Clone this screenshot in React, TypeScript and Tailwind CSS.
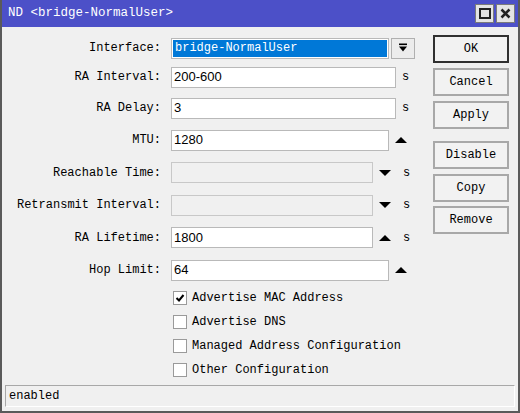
import React from "react";

const mono = { fontFamily: '"Liberation Mono", "DejaVu Sans Mono", monospace' };
const sans = { fontFamily: '"Liberation Sans", Arial, sans-serif' };

function Up() {
  return (
    <svg width="12" height="8" viewBox="0 0 12 8"><path d="M0 7 L6 1 L12 7 Z" fill="#000" /></svg>
  );
}
function Down() {
  return (
    <svg width="12" height="8" viewBox="0 0 12 8"><path d="M0 1 L6 7 L12 1 Z" fill="#000" /></svg>
  );
}

function Label({ text }: { text: string }) {
  return (
    <div className="w-[160px] shrink-0 text-right pr-[1px] text-[12px] text-black" style={mono}>
      {text}
    </div>
  );
}

function Field({
  label,
  value,
  width,
  disabled,
  arrow,
  unit,
  h,
}: {
  label: string;
  value?: string;
  width: number;
  disabled?: boolean;
  arrow?: "up" | "down";
  unit?: boolean;
  h: string;
}) {
  return (
    <div className={`flex items-center ${h}`}>
      <Label text={label} />
      <div
        className={`ml-[9px] h-[21px] border flex items-center pl-[2px] text-[13px] text-black ${
          disabled ? "bg-[#f0f0f0] border-[#c8c8c8]" : "bg-white border-[#b9b9b9]"
        }`}
        style={{ ...sans, width }}
      >
        {value}
      </div>
      {arrow && (
        <div className="w-[24px] flex justify-center items-center">
          {arrow === "up" ? <Up /> : <Down />}
        </div>
      )}
      {unit && (
        <div className="ml-[6px] text-[12px] text-black" style={mono}>
          s
        </div>
      )}
    </div>
  );
}

function Btn({ text, def, mt }: { text: string; def?: boolean; mt?: string }) {
  return (
    <div
      className={`w-[76px] h-[28px] flex items-center justify-center bg-[#f2f2f2] text-[12px] text-black ${
        def ? "border-2 border-[#303030]" : "border-2 border-[#a8a8a8]"
      } ${mt ?? ""}`}
      style={mono}
    >
      {text}
    </div>
  );
}

function Check({ label, checked }: { label: string; checked?: boolean }) {
  return (
    <div className="flex items-center h-[24px] pl-[171px]">
      <div className="w-[14px] h-[14px] bg-white border border-[#9a9a9a] flex items-center justify-center">
        {checked && (
          <svg width="10" height="10" viewBox="0 0 10 10">
            <path d="M1.5 5 L4 7.5 L8.5 2" stroke="#000" strokeWidth="2" fill="none" />
          </svg>
        )}
      </div>
      <div className="ml-[5px] text-[12px] text-black" style={mono}>
        {label}
      </div>
    </div>
  );
}

export default function App() {
  return (
    <div className="w-[520px] h-[413px] bg-[#f0f0f0] border-x-2 border-b-2 border-[#5a5a5a] flex flex-col overflow-hidden">
      <div className="h-[27px] bg-[#4c50c8] flex items-center justify-between pl-[6px] pr-[3px]">
        <div className="text-white text-[12.5px]" style={mono}>
          ND &lt;bridge-NormalUser&gt;
        </div>
        <div className="flex gap-[2px]">
          <div className="w-[19px] h-[19px] bg-[#e4e4e4] border border-[#7a7a7a] flex items-center justify-center">
            <div className="w-[12px] h-[11px] border-2 border-[#222]" />
          </div>
          <div className="w-[19px] h-[19px] bg-[#e4e4e4] border border-[#7a7a7a] flex items-center justify-center">
            <svg width="11" height="11" viewBox="0 0 11 11">
              <path d="M1.5 1.5 L9.5 9.5 M9.5 1.5 L1.5 9.5" stroke="#222" strokeWidth="2.5" />
            </svg>
          </div>
        </div>
      </div>
      <div className="flex flex-1">
        <div className="flex-1 pt-[7px]">
          <div className="flex items-center h-[28px]">
            <Label text="Interface:" />
            <div className="ml-[9px] w-[218px] h-[21px] bg-white border border-[#b9b9b9] p-[1px]">
              <div className="h-full bg-[#0078d7] text-white text-[12px] flex items-center pl-[2px]" style={mono}>
                bridge-NormalUser
              </div>
            </div>
            <div className="ml-[2px] w-[24px] h-[21px] border border-[#b0b0b0] bg-[#ececec] flex items-center justify-center">
              <svg width="10" height="10" viewBox="0 0 10 10">
                <rect x="1" y="0.5" width="8" height="1.6" fill="#000" />
                <path d="M1 3.5 L9 3.5 L5 8.5 Z" fill="#000" />
              </svg>
            </div>
          </div>
          <Field h="h-[30px]" label="RA Interval:" value="200-600" width={225} unit />
          <Field h="h-[32px]" label="RA Delay:" value="3" width={225} unit />
          <Field h="h-[32px]" label="MTU:" value="1280" width={218} arrow="up" />
          <Field h="h-[33px]" label="Reachable Time:" width={202} disabled arrow="down" unit />
          <Field h="h-[32px]" label="Retransmit Interval:" width={202} disabled arrow="down" unit />
          <Field h="h-[33px]" label="RA Lifetime:" value="1800" width={202} arrow="up" unit />
          <Field h="h-[32px]" label="Hop Limit:" value="64" width={218} arrow="up" />
          <div>
            <Check label="Advertise MAC Address" checked />
            <Check label="Advertise DNS" />
            <Check label="Managed Address Configuration" />
            <Check label="Other Configuration" />
          </div>
        </div>
        <div className="w-[85px] pt-[8px] flex flex-col">
          <Btn text="OK" def />
          <Btn text="Cancel" mt="mt-[5px]" />
          <Btn text="Apply" mt="mt-[5px]" />
          <Btn text="Disable" mt="mt-[12px]" />
          <Btn text="Copy" mt="mt-[5px]" />
          <Btn text="Remove" mt="mt-[4px]" />
        </div>
      </div>
      <div className="mx-[3px] mb-[4px] h-[22px] border border-[#a8a8a8] border-r-white border-b-white flex items-center pl-[3px] text-[12px] text-black" style={mono}>
        enabled
      </div>
    </div>
  );
}
